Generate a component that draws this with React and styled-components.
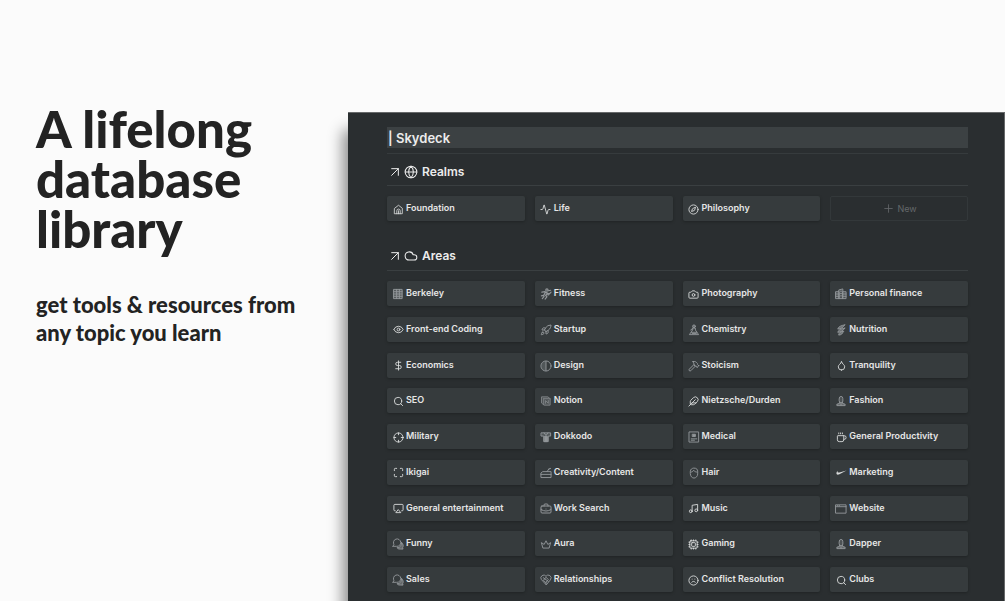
import React from "react"
import styled, { createGlobalStyle } from "styled-components"
import {
    Activity, Airplay, Camera, Cloud, Coffee, Compass, Cpu, Crosshair, DollarSign, Droplet,
    Eye, Feather, Frown, Globe, Maximize, Music, Plus, Rocket, Search, ArrowUpRight,
    BriefcaseBusiness, Hammer
} from "lucide-react"

const Svg = ({children, ...rest})=>(
    <svg viewBox="-1 -1 26 26" fill="none" stroke="currentColor" strokeWidth="2" strokeLinecap="round" strokeLinejoin="round" {...rest}>
        {children}
    </svg>
)

const House = (p)=>(
    <Svg {...p}>
        <path d="M3 9 12 2l9 7v13H3z"/>
        <path d="M8 22v-7a4 4 0 0 1 8 0v7M12 15v7"/>
    </Svg>
)
const Building = (p)=>(
    <Svg {...p}>
        <path d="M3 2h18v20H3z" fill="currentColor" fillOpacity="0.35"/>
        <path d="M9 2v20M15 2v20M3 7h18M3 12h18M3 17h18"/>
    </Svg>
)
const Runner = (p)=>(
    <Svg {...p} strokeWidth="2.5">
        <circle cx="14" cy="3.500" r="2.500"/>
        <path d="M3 8l7-1 5 3-4 5 3 3-4 5M11 8l-4 7-5 1M15 10l4 2 4-4M8 17l-4 5M17 5l5-1M13 13l5 1"/>
    </Svg>
)
const Contrast = (p)=>(
    <Svg {...p}>
        <circle cx="12" cy="12" r="11"/>
        <path d="M12 2v20"/>
        <path d="M12 2a10 10 0 0 0 0 20z" fill="currentColor" fillOpacity="0.3" stroke="none"/>
    </Svg>
)
const Stack = (p)=>(
    <Svg {...p} opacity="0.8">
        <path d="M3 3h13l5 4v14H8l-5-4z" fill="currentColor" fillOpacity="0.35"/>
        <path d="M7 7h14M7 7v13M11 17v-6l6 6v-6"/>
    </Svg>
)
const Robe = (p)=>(
    <Svg {...p}>
        <path d="M2 3h20v7h-5v12H7V10H2z" fill="currentColor" fillOpacity="0.3"/>
        <path d="M9 11h6v11H9z" fill="currentColor"/>
        <path d="M8 3l4 6 4-6"/>
    </Svg>
)
const Cake = (p)=>(
    <Svg {...p}>
        <path d="M1 21V12l4-3h18v12zM1 15h22M14 9l5-6M17 4l5-2"/>
    </Svg>
)
const Crown = (p)=>(
    <Svg {...p}>
        <path d="M5 20 2 9l6 4 4-8 4 8 6-4-3 11z"/>
    </Svg>
)
const HeartKnot = (p)=>(
    <Svg {...p}>
        <path d="M12 22 2 11a6 6 0 0 1 10-7 6 6 0 0 1 10 7z"/>
        <path d="M7 12l5-6 5 5-5 6zM6 7l11 8M12 17v4"/>
    </Svg>
)
const Flask = (p)=>(
    <Svg {...p}>
        <circle cx="12" cy="4" r="3" fill="currentColor" fillOpacity="0.5"/>
        <path d="M9 8h6v4l7 10H2l7-10zM6 17h12M8 19.500h9M5 12l4-2"/>
    </Svg>
)
const Bust = (p)=>(
    <Svg {...p}>
        <path d="M8 7a4 5 0 0 1 8 0v5a4 4 0 0 1-8 0z" fill="currentColor" fillOpacity="0.25"/>
        <path d="M9 15v2l-6 2v3h18v-3l-6-2v-2" fill="currentColor" fillOpacity="0.5"/>
        <path d="M12 18v3"/>
    </Svg>
)
const Card = (p)=>(
    <Svg {...p}>
        <path d="M2 1h20v22H2z"/>
        <path d="M9 6h6v5H9z" fill="currentColor"/>
        <path d="M6 16h12M6 19h7"/>
    </Svg>
)
const Head = (p)=>(
    <Svg {...p}>
        <path d="M4 8c0-9 16-9 16 0v6c0 5-4 9-8 9s-8-4-8-9z"/>
        <path d="M5 10c4 0 5-2 6-4 2 3 5 4 8 4"/>
    </Svg>
)
const Banknotes = (p)=>(
    <Svg {...p}>
        <path d="M1 7h7v15H1zM8 3l8-2v21H8zM16 7h7v15h-7z" fill="currentColor" fillOpacity="0.25"/>
        <path d="M1 12h7M1 17h7M11 6h2M11 11h2M11 16h2M16 12h7M16 17h7"/>
    </Svg>
)
const Leaves = (p)=>(
    <Svg {...p}>
        <path d="M20 1c-8 1-14 4-15 9 6 0 12-3 15-9zM20 8c-8 1-14 4-15 9 6 0 12-3 15-9zM17 15c-5 0-10 3-10 8 5 0 9-3 10-8z" fill="currentColor" fillOpacity="0.6"/>
    </Svg>
)
const Swoosh = (p)=>(
    <Svg {...p} stroke="none">
        <path d="M24 7 7 16c-4 2-7 1-7-2 0-2 1-4 3-6-1 3 0 5 4 4z" fill="currentColor"/>
    </Svg>
)
const Browser = (p)=>(
    <Svg {...p}>
        <path d="M1 3h22v18H1zM1 7h22M4 5h1M8 5h1"/>
    </Svg>
)
const Chats = (p)=>(
    <Svg {...p}>
        <path d="M3 13a8 8 0 1 1 6 4H1z"/>
        <path d="M20 9c4 3 4 8 2 11l1 3h-6c-4 0-6-1-7-3 6 0 10-4 10-11z" fill="currentColor" fillOpacity="0.5"/>
    </Svg>
)

const realms = [
    {name: "Foundation", icon: House},
    {name: "Life", icon: Activity},
    {name: "Philosophy", icon: Compass},
]

const areas = [
    {name: "Berkeley", icon: Building, dim: true},
    {name: "Fitness", icon: Runner, dim: true},
    {name: "Photography", icon: Camera},
    {name: "Personal finance", icon: Banknotes, dim: true},
    {name: "Front-end Coding", icon: Eye},
    {name: "Startup", icon: Rocket, dim: true},
    {name: "Chemistry", icon: Flask, dim: true},
    {name: "Nutrition", icon: Leaves, dim: true},
    {name: "Economics", icon: DollarSign},
    {name: "Design", icon: Contrast, dim: true},
    {name: "Stoicism", icon: Hammer, dim: true},
    {name: "Tranquility", icon: Droplet},
    {name: "SEO", icon: Search},
    {name: "Notion", icon: Stack, dim: true},
    {name: "Nietzsche/Durden", icon: Feather},
    {name: "Fashion", icon: Bust, dim: true},
    {name: "Military", icon: Crosshair},
    {name: "Dokkodo", icon: Robe, dim: true},
    {name: "Medical", icon: Card, dim: true},
    {name: "General Productivity", icon: Coffee},
    {name: "Ikigai", icon: Maximize},
    {name: "Creativity/Content", icon: Cake, dim: true},
    {name: "Hair", icon: Head, dim: true},
    {name: "Marketing", icon: Swoosh},
    {name: "General entertainment", icon: Airplay},
    {name: "Work Search", icon: BriefcaseBusiness, dim: true},
    {name: "Music", icon: Music},
    {name: "Website", icon: Browser, dim: true},
    {name: "Funny", icon: Chats, dim: true},
    {name: "Aura", icon: Crown, dim: true},
    {name: "Gaming", icon: Cpu},
    {name: "Dapper", icon: Bust, dim: true},
    {name: "Sales", icon: Chats, dim: true},
    {name: "Relationships", icon: HeartKnot, dim: true},
    {name: "Conflict Resolution", icon: Frown},
    {name: "Clubs", icon: Search},
]

const Tiles = ({items})=>(
    items.map(({name, icon: Icon, dim})=>(
        <Tile href="#" key={name}>
            <TileIcon $dim={dim}><Icon aria-hidden="true"/></TileIcon>
            {name}
        </Tile>
    ))
)

const App = ()=>{
    return(
        <Page>
            <GlobalStyle/>
            <Intro>
                <Title>A lifelong database library</Title>
                <Tagline>get tools & resources from any topic you learn</Tagline>
            </Intro>
            <Panel>
                <Banner>| Skydeck</Banner>
                <Section>
                    <Heading>
                        <ArrowUpRight size={16} strokeWidth={1.5}/>
                        <Globe size={14} strokeWidth={1.75}/>
                        <HeadingText>Realms</HeadingText>
                    </Heading>
                    <Grid>
                        <Tiles items={realms}/>
                        <NewButton type="button"><Plus size={13} strokeWidth={1.5}/>New</NewButton>
                    </Grid>
                </Section>
                <Section $grow>
                    <Heading>
                        <ArrowUpRight size={16} strokeWidth={1.5}/>
                        <Cloud size={14} strokeWidth={1.75}/>
                        <HeadingText>Areas</HeadingText>
                    </Heading>
                    <Grid>
                        <Tiles items={areas}/>
                    </Grid>
                </Section>
            </Panel>
        </Page>
    )
}
export default App

const GlobalStyle = createGlobalStyle`
*{
    box-sizing: border-box;
}
body{
    margin: 0;
    background-color: #fbfbfb;
}
`
const Page = styled.main`
display: flex;
min-height: 100vh;
padding-top: 112px;
overflow: hidden;
color: #232323;
`
const Intro = styled.div`
flex: none;
width: 348px;
padding: 0 36px;
font-family: Lato, "Liberation Sans", sans-serif;
`
const Title = styled.h1`
margin: -8px 0 0;
font-size: 51px;
line-height: 50px;
font-weight: 900;
`
const Tagline = styled.p`
margin: 37px 0 0;
font-size: 22px;
line-height: 28px;
font-weight: 900;
`
const Panel = styled.section`
display: flex;
flex-direction: column;
flex: 1;
min-width: 0;
padding: 14px 36px 9px 39px;
border-top: 1px solid #67696a;
border-right: 1px solid #67696a;
background-color: #2a2e30;
box-shadow: -5px 18px 14px rgba(0,0,0,0.45);
color: #ececec;
font-family: Inter, "Liberation Sans", sans-serif;
`
const Banner = styled.h2`
margin: 0 0 5px;
padding: 1px 0 0 1px;
background-color: #3c4143;
font-size: 13px;
line-height: 20px;
font-weight: 600;
`
const Section = styled.div`
display: flex;
flex-direction: column;
flex: ${({$grow})=> $grow ? "1" : "none"};
& + &{
    margin-top: 17px;
}
`
const Heading = styled.h3`
display: flex;
align-items: center;
gap: 1px;
height: 33px;
margin: 0 0 10px;
padding-top: 4px;
border-bottom: 1px solid #3a3f41;
font-size: 12px;
line-height: 16px;
font-weight: 600;
${Section}:first-of-type &{
    border-top: 1px solid #363b3d;
}
`
const HeadingText = styled.span`
padding-left: 3px;
`
const Grid = styled.div`
display: grid;
flex: 1;
grid-template-columns: repeat(4, 1fr);
gap: 10px;
align-content: space-between;
`
const Tile = styled.a`
display: flex;
align-items: flex-start;
gap: 2px;
height: 25px;
padding: 6px 5px 0;
border-radius: 2px;
background-color: #363b3d;
box-shadow: 0 1px 3px rgba(0,0,0,0.25);
color: #e6e6e6;
font-size: 9px;
line-height: 12px;
font-weight: 600;
white-space: nowrap;
text-decoration: none;
`
const TileIcon = styled.span`
flex: none;
display: flex;
align-items: center;
justify-content: center;
width: 12px;
height: 14px;
color: ${({$dim})=> $dim ? "#93979a" : "#d8dada"};
svg{
    width: ${({$dim})=> $dim ? "12px" : "11px"};
    height: ${({$dim})=> $dim ? "12px" : "11px"};
}
`
const NewButton = styled.button`
display: flex;
align-items: center;
justify-content: center;
gap: 3px;
height: 25px;
padding: 0;
border: 1px solid #33383a;
border-radius: 2px;
background: none;
color: #64686a;
font-family: inherit;
font-size: 9px;
line-height: 12px;
`
